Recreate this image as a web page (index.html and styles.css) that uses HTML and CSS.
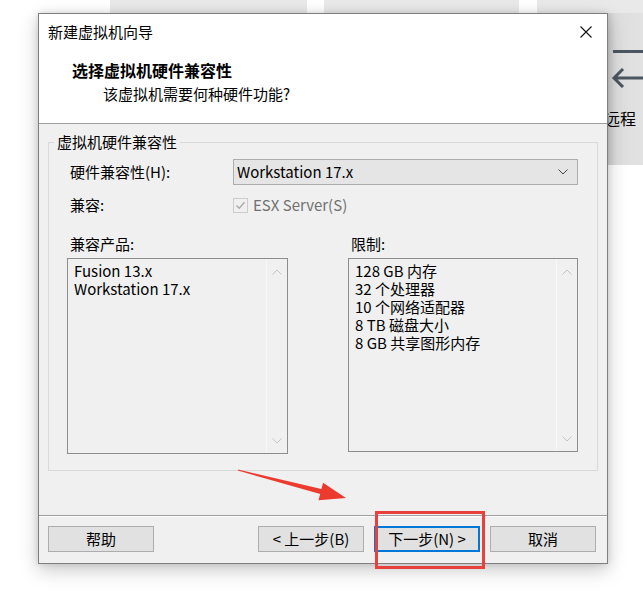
FILE: index.html
```html
<!DOCTYPE html>
<html lang="zh-CN">
<head>
  <meta charset="UTF-8">
  <title>新建虚拟机向导</title>
  <link rel="stylesheet" href="styles.css">
</head>
<body>
  <div class="desk">

    <!-- things behind the dialog -->
    <div class="tab tab--one"></div>
    <div class="tab tab--two"></div>
    <div class="tab tab--three"></div>
    <div class="side-panel">
      <span class="side-panel__bar"></span>
      <svg class="side-panel__arrow" width="34" height="20" viewBox="0 0 34 20">
        <path d="M34 10 H3 M12 1 L3 10 L12 19" fill="none" stroke="#4b5661" stroke-width="3"/>
      </svg>
      <span class="side-panel__text">远程</span>
    </div>

    <div class="dialog">
      <div class="titlebar">
        <span class="titlebar__text">新建虚拟机向导</span>
        <svg class="titlebar__close" width="12" height="12" viewBox="0 0 12 12">
          <path d="M0.5 0.5 L11.5 11.5 M11.5 0.5 L0.5 11.5" stroke="#111" stroke-width="1.1"/>
        </svg>
      </div>

      <div class="header">
        <h1 class="header__title">选择虚拟机硬件兼容性</h1>
        <p class="header__sub">该虚拟机需要何种硬件功能?</p>
      </div>

      <div class="content">
        <fieldset class="group">
          <legend class="group__legend">虚拟机硬件兼容性</legend>

          <div class="form-row">
            <label class="field-label">硬件兼容性(H):</label>
            <div class="combo">
              <span class="combo__value">Workstation 17.x</span>
              <svg class="combo__chevron" width="10" height="6" viewBox="0 0 10 6">
                <path d="M0.5 0.5 L5 5 L9.5 0.5" fill="none" stroke="#444" stroke-width="1"/>
              </svg>
            </div>
          </div>

          <div class="form-row form-row--check">
            <span class="field-label">兼容:</span>
            <div class="check">
              <span class="check__box">
                <svg width="13" height="13" viewBox="0 0 13 13">
                  <path d="M2.5 6.5 L5.2 9.3 L10.5 3.2" fill="none" stroke="#a8a8a8" stroke-width="1.3"/>
                </svg>
              </span>
              <span class="check__text">ESX Server(S)</span>
            </div>
          </div>

          <div class="lists">
            <div class="list-col">
              <span class="list-label">兼容产品:</span>
              <div class="list list--left">
                <div class="list__items">
                  <div>Fusion 13.x</div>
                  <div>Workstation 17.x</div>
                </div>
                <div class="list__scroll">
                  <svg width="10" height="6" viewBox="0 0 10 6"><path d="M0.5 5.5 L5 1 L9.5 5.5" fill="none" stroke="#c4c4c4"/></svg>
                  <svg width="10" height="6" viewBox="0 0 10 6"><path d="M0.5 0.5 L5 5 L9.5 0.5" fill="none" stroke="#c4c4c4"/></svg>
                </div>
              </div>
            </div>
            <div class="list-col">
              <span class="list-label">限制:</span>
              <div class="list list--right">
                <div class="list__items">
                  <div>128 GB 内存</div>
                  <div>32 个处理器</div>
                  <div>10 个网络适配器</div>
                  <div>8 TB 磁盘大小</div>
                  <div>8 GB 共享图形内存</div>
                </div>
                <div class="list__scroll">
                  <svg width="10" height="6" viewBox="0 0 10 6"><path d="M0.5 5.5 L5 1 L9.5 5.5" fill="none" stroke="#c4c4c4"/></svg>
                  <svg width="10" height="6" viewBox="0 0 10 6"><path d="M0.5 0.5 L5 5 L9.5 0.5" fill="none" stroke="#c4c4c4"/></svg>
                </div>
              </div>
            </div>
          </div>
        </fieldset>
      </div>

      <div class="footer">
        <button class="btn">帮助</button>
        <div class="footer__nav">
          <button class="btn">&lt; 上一步(B)</button>
          <button class="btn btn--default">下一步(N) &gt;</button>
          <button class="btn">取消</button>
        </div>
      </div>
    </div>

    <!-- annotations drawn over the screenshot -->
    <svg class="pointer" width="643" height="597" viewBox="0 0 643 597">
      <polygon points="238,469.4 321.4,489.1 323.1,482.8 346,498 318.5,500.2 320.2,493.9 237.8,470.6" fill="#ec3b2e"/>
    </svg>
    <div class="highlight"></div>
  </div>
</body>
</html>
```

FILE: styles.css
```css
* {
  box-sizing: border-box;
  margin: 0;
  padding: 0;
}

:root {
  --font: "Noto Sans CJK SC", "Noto Sans", sans-serif;
  --dialog-bg: #f0f0f0;
  --line: #a0a0a0;
  --button-bg: #e1e1e1;
  --button-border: #adadad;
  --accent: #0078d7;
  --mark: #e8403d;
}

body {
  background: #fff;
  font-family: var(--font);
  font-size: 15px;
  color: #000;
}

.desk {
  position: relative;
  width: 643px;
  height: 597px;
  overflow: hidden;
  background: #fff;
}

/* Background window bits */

.tab {
  position: absolute;
  top: -12px;
  height: 40px;
  border-radius: 10px;
  background: #e9e9e9;
}
.tab--one { left: 110px; width: 197px; }
.tab--two { left: 324px; width: 195px; }
.tab--three { left: 537px; width: 130px; }

.side-panel {
  position: absolute;
  left: 600px;
  top: 13px;
  width: 43px;
  height: 152px;
  background: linear-gradient(90deg, #c9c9c9, #dedede 40%, #e2e2e2);
}
.side-panel__bar {
  position: absolute;
  left: 13px;
  top: 37px;
  width: 40px;
  height: 3px;
  background: #4b5661;
}
.side-panel__arrow {
  position: absolute;
  left: 11px;
  top: 55px;
}
.side-panel__text {
  position: absolute;
  left: 4px;
  top: 94px;
  line-height: 22px;
  font-size: 16px;
}

/* Dialog */

.dialog {
  position: absolute;
  left: 38px;
  top: 13px;
  width: 570px;
  height: 551px;
  display: flex;
  flex-direction: column;
  border: 1px solid #7f7f7f;
  background: var(--dialog-bg);
  box-shadow: 0 6px 18px rgba(0, 0, 0, 0.22), 0 0 6px rgba(0, 0, 0, 0.12);
}

.titlebar {
  height: 38px;
  display: flex;
  align-items: center;
  justify-content: space-between;
  padding: 0 15px 0 9px;
  background: #fff;
}
.titlebar__text {
  line-height: 20px;
  margin-top: -2px;
}
.titlebar__close {
  margin-top: -2px;
}

.header {
  height: 72px;
  padding: 8px 0 0 33px;
  background: #fff;
  border-bottom: 1px solid var(--line);
}
.header__title {
  font-size: 16px;
  font-weight: bold;
  line-height: 20px;
}
.header__sub {
  margin: 4px 0 0 31px;
  line-height: 20px;
}

.content {
  flex: 1;
  padding: 8px 9px 0 9px;
}

.group {
  border: 1px solid #d9d9d9;
  padding: 7px 19px 16px 18px;
}
.group__legend {
  margin-left: -13px;
  padding: 0 3px;
  line-height: 20px;
}

.form-row {
  display: grid;
  grid-template-columns: 166px 1fr;
  align-items: center;
  height: 26px;
}
.form-row--check {
  height: 20px;
  margin-top: 10px;
}
.field-label {
  padding-left: 3px;
  line-height: 20px;
}

.combo {
  height: 26px;
  display: flex;
  align-items: center;
  justify-content: space-between;
  padding: 0 9px 0 3px;
  border: 1px solid var(--button-border);
  background: #e5e5e5;
}
.combo__value {
  line-height: 20px;
}

.check {
  display: flex;
  align-items: center;
  gap: 5px;
}
.check__box {
  width: 15px;
  height: 15px;
  display: flex;
  align-items: center;
  justify-content: center;
  border: 1px solid #cccccc;
}
.check__text {
  color: #707070;
  line-height: 20px;
}

.lists {
  display: grid;
  grid-template-columns: 221px 1fr;
  column-gap: 60px;
  margin-top: 19px;
}
.list-col {
  display: flex;
  flex-direction: column;
}
.list-label {
  padding-left: 3px;
  line-height: 20px;
  margin-bottom: 4px;
}
.list {
  display: flex;
  border: 1px solid #8d8d8d;
  background: var(--dialog-bg);
}
.list--left { height: 196px; }
.list--right { height: 194px; }
.list__items {
  flex: 1;
  padding: 3px 6px;
  line-height: 18px;
}
.list__scroll {
  width: 21px;
  display: flex;
  flex-direction: column;
  justify-content: space-between;
  align-items: center;
  padding: 10px 0 9px;
  border-left: 1px solid #f8f8f8;
}

/* Footer buttons */

.footer {
  height: 48px;
  display: flex;
  align-items: flex-start;
  padding: 10px 11px 0 9px;
  border-top: 1px solid var(--line);
  box-shadow: inset 0 1px 0 #fff;
}
.footer__nav {
  display: flex;
  gap: 10px;
  margin-left: auto;
}
.btn {
  width: 106px;
  height: 26px;
  font-family: var(--font);
  font-size: 15px;
  line-height: 20px;
  color: #000;
  background: var(--button-bg);
  border: 1px solid var(--button-border);
}
.btn--default {
  border: 2px solid var(--accent);
}

/* Annotations */

.pointer {
  position: absolute;
  left: 0;
  top: 0;
  pointer-events: none;
}
.highlight {
  position: absolute;
  left: 375px;
  top: 511px;
  width: 110px;
  height: 58px;
  border: 3px solid var(--mark);
}
```
